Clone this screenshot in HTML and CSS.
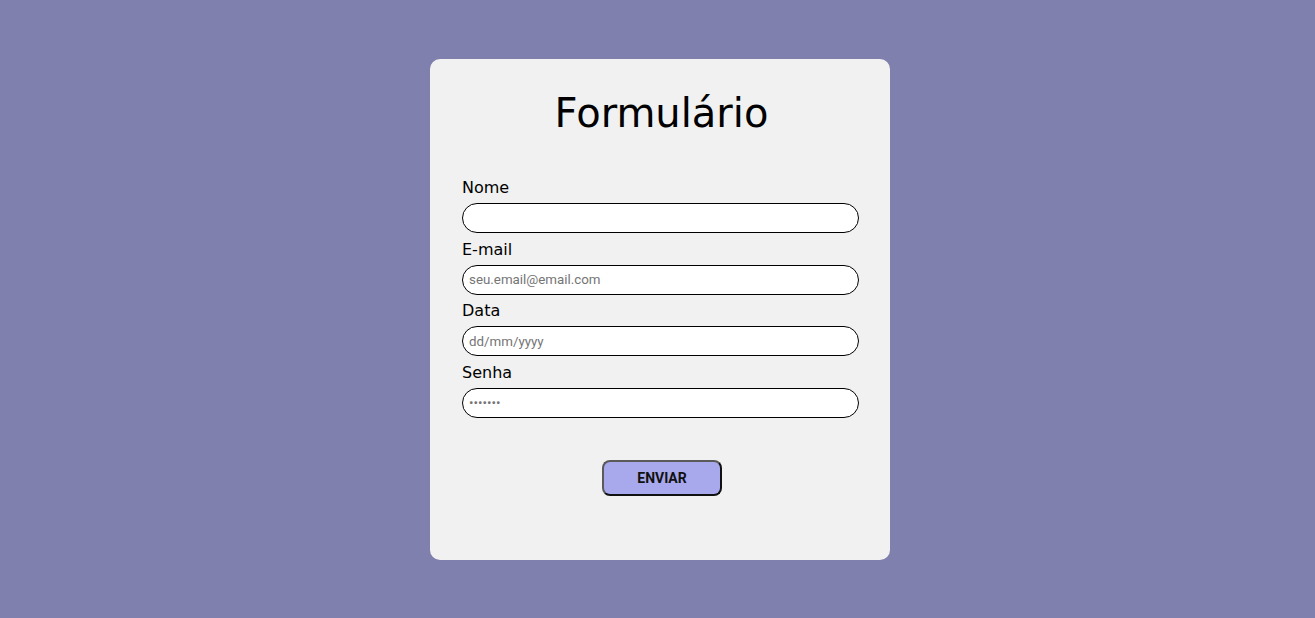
FILE: index.html
```html
<!DOCTYPE html>
<html lang="pt-BR">
<head>
<meta charset="utf-8">
<title>Formulário</title>
<link rel="stylesheet" href="styles.css">
</head>
<body>
<main class="page">
  <form class="card">
    <h1 class="title">Formulário</h1>
    <div class="fields">
      <label class="label" for="nome">Nome</label>
      <input class="input" id="nome" type="text">
      <label class="label" for="email">E-mail</label>
      <input class="input" id="email" type="text" placeholder="seu.email@email.com">
      <label class="label" for="data">Data</label>
      <input class="input" id="data" type="text" placeholder="dd/mm/yyyy">
      <label class="label" for="senha">Senha</label>
      <input class="input" id="senha" type="password" placeholder="•••••••">
    </div>
    <div class="actions">
      <button class="button" type="button">ENVIAR</button>
    </div>
  </form>
</main>
</body>
</html>
```
FILE: styles.css
```css
* { box-sizing: border-box; }
html, body { margin: 0; padding: 0; }
body {
  background: #8080ae;
  font-family: "DejaVu Sans", Verdana, sans-serif;
  height: 618px;
}
.page {
  display: flex;
  justify-content: center;
  padding-top: 59px;
  padding-left: 5px;
}
.card {
  width: 460px;
  height: 501px;
  background: #f1f1f1;
  border-radius: 10px;
  padding: 31px 31px 0 32px;
}
.title {
  margin: 0 0 0 2px;
  font-size: 40px;
  font-weight: normal;
  text-align: center;
  color: #000;
  line-height: 46px;
}
.fields {
  display: flex;
  flex-direction: column;
  margin-top: 42px;
}
.label {
  font-size: 16px;
  line-height: 19px;
  color: #000;
  margin-bottom: 6px;
}
.input {
  height: 30px;
  border: 1px solid #000;
  border-radius: 15px;
  background: #fff;
  padding: 0 6px;
  margin-bottom: 6.67px;
  font-family: Roboto, "Liberation Sans", Arial, sans-serif;
  font-size: 13.33px;
  color: #000;
  outline: none;
}
.input::placeholder { color: #757575; }
.actions {
  display: flex;
  justify-content: center;
  margin-top: 35px;
  padding-left: 3px;
}
.button {
  width: 120px;
  height: 36px;
  background: #a8a8ec;
  border: 2px solid;
  border-color: #5a5a5a #111 #111 #5a5a5a;
  border-radius: 8px;
  font-family: Roboto, "Liberation Sans", Arial, sans-serif;
  font-weight: bold;
  font-size: 14px;
  color: #111;
  cursor: pointer;
}
```
